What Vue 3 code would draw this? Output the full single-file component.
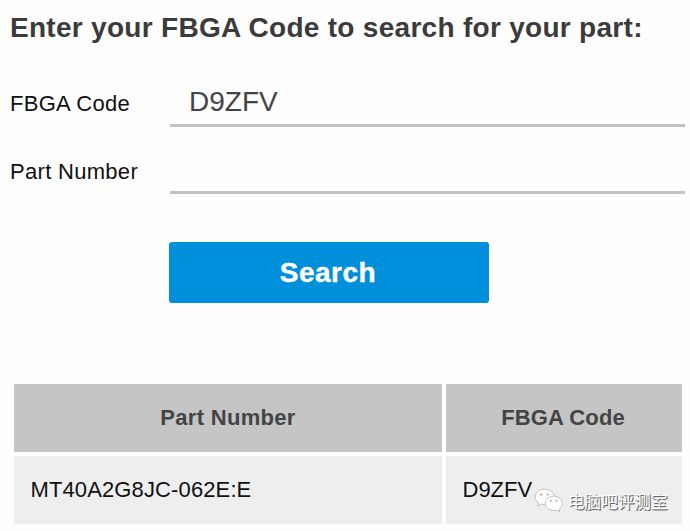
<script setup>
import { ref } from 'vue'

const fbgaCode = ref('D9ZFV')
const partNumber = ref('')
const rows = [{ part: 'MT40A2G8JC-062E:E', code: 'D9ZFV' }]
</script>

<template>
  <main class="page">
    <h1 class="title">Enter your FBGA Code to search for your part:</h1>
    <form class="form" @submit.prevent>
      <label class="label" for="fbga">FBGA Code</label>
      <input id="fbga" v-model="fbgaCode" class="input" type="text" />
      <label class="label label-part" for="part">Part Number</label>
      <input id="part" v-model="partNumber" class="input" type="text" />
      <button class="search" type="submit">Search</button>
    </form>
    <section class="results">
      <div class="head head-part">Part Number</div>
      <div class="head head-code">FBGA Code</div>
      <template v-for="row in rows" :key="row.part">
        <div class="cell cell-part">{{ row.part }}</div>
        <div class="cell">{{ row.code }}</div>
      </template>
      <div class="watermark">
        <svg class="logo" viewBox="0 0 30 27" width="30" height="27">
          <g stroke="#aaa" stroke-width="0.7" fill="#fff">
            <path d="M10.500 1.200C5.200 1.200 1.200 4.600 1.200 9c0 2.500 1.300 4.600 3.400 6l-.8 3 3.500-1.900c1.200.3 2.200.4 3.500.4 5.200 0 9.400-3.100 9.400-7.500 0-4.400-4.400-7.800-9.700-7.800z" />
            <path d="M19.600 8.200c-4.700 0-8.200 3.200-8.200 7.100 0 4 3.700 7.200 8.300 7.200 1.100 0 2-.1 3-.4l3.100 1.700-.8-2.600c1.900-1.300 3.100-3.400 3.100-5.700 0-4.100-3.800-7.300-8.500-7.300z" />
          </g>
          <g fill="#999">
            <circle cx="7" cy="6.600" r="1" />
            <circle cx="13.700" cy="6.600" r="1" />
            <circle cx="16.800" cy="12.800" r="0.9" />
            <circle cx="22.500" cy="12.800" r="0.9" />
          </g>
        </svg>
        <span class="account">电脑吧评测室</span>
      </div>
    </section>
  </main>
</template>

<style>
body {
  margin: 0;
  background: #fefefe;
}
</style>

<style scoped>
.page {
  box-sizing: border-box;
  width: 690px;
  height: 531px;
  padding: 10px 5px 0 10px;
  overflow: hidden;
  color: #111;
  font-family: "Liberation Sans", Arial, sans-serif;
  font-size: 22px;
}
.title {
  margin: 0;
  color: #3b3b3b;
  font-size: 28px;
  font-weight: 700;
  line-height: 36px;
  letter-spacing: 0.29px;
  white-space: nowrap;
}
.form {
  display: grid;
  grid-template-columns: 159px 516px;
  grid-template-rows: 48px 67px 61px;
  column-gap: 0;
  padding-top: 33px;
}
.label {
  line-height: 24px;
  padding-top: 13px;
  letter-spacing: 0.3px;
  white-space: nowrap;
}
.label-part {
  padding-top: 33px;
  letter-spacing: 0.3px;
}
.input {
  box-sizing: border-box;
  align-self: end;
  width: 515px;
  height: 48px;
  margin: 0 0 0 1px;
  padding: 0 18px 0 19px;
  border: 0;
  border-bottom: 3px solid #c3c3c3;
  outline: 0;
  background: transparent;
  color: #444;
  font: 28px "Liberation Sans", Arial, sans-serif;
}
.search {
  grid-column: 2;
  width: 320px;
  height: 61px;
  margin: 48px 0 0;
  padding: 0 2px 0 0;
  border: 0;
  border-radius: 3px;
  background: #008fdb;
  color: #fff;
  font: 700 28px "Liberation Sans", Arial, sans-serif;
  letter-spacing: 0.5px;
  -webkit-text-stroke: 0.4px #fff;
}
.results {
  position: relative;
  display: grid;
  grid-template-columns: 428px 236px;
  grid-template-rows: 68px 68px;
  gap: 4px;
  margin: 129px 0 0 4px;
}
.head {
  display: flex;
  align-items: center;
  justify-content: center;
  background: #c5c5c5;
  color: #444;
  font-weight: 700;
}
.head-part {
  letter-spacing: 0.3px;
}
.head-code {
  padding-right: 2px;
  letter-spacing: 0.1px;
}
.cell {
  display: flex;
  align-items: center;
  padding-left: 16.500px;
  background: #eee;
}
.cell-part {
  letter-spacing: 0.12px;
}
.watermark {
  position: absolute;
  left: 520px;
  top: 103px;
  display: flex;
  align-items: center;
  gap: 4px;
}
.account {
  color: #fff;
  font-family: "Noto Sans CJK SC", sans-serif;
  font-size: 16.600px;
  line-height: 28px;
  text-shadow: 1px 1px 0 #666, 0.5px 0.5px 0 #777;
  white-space: nowrap;
}
</style>
